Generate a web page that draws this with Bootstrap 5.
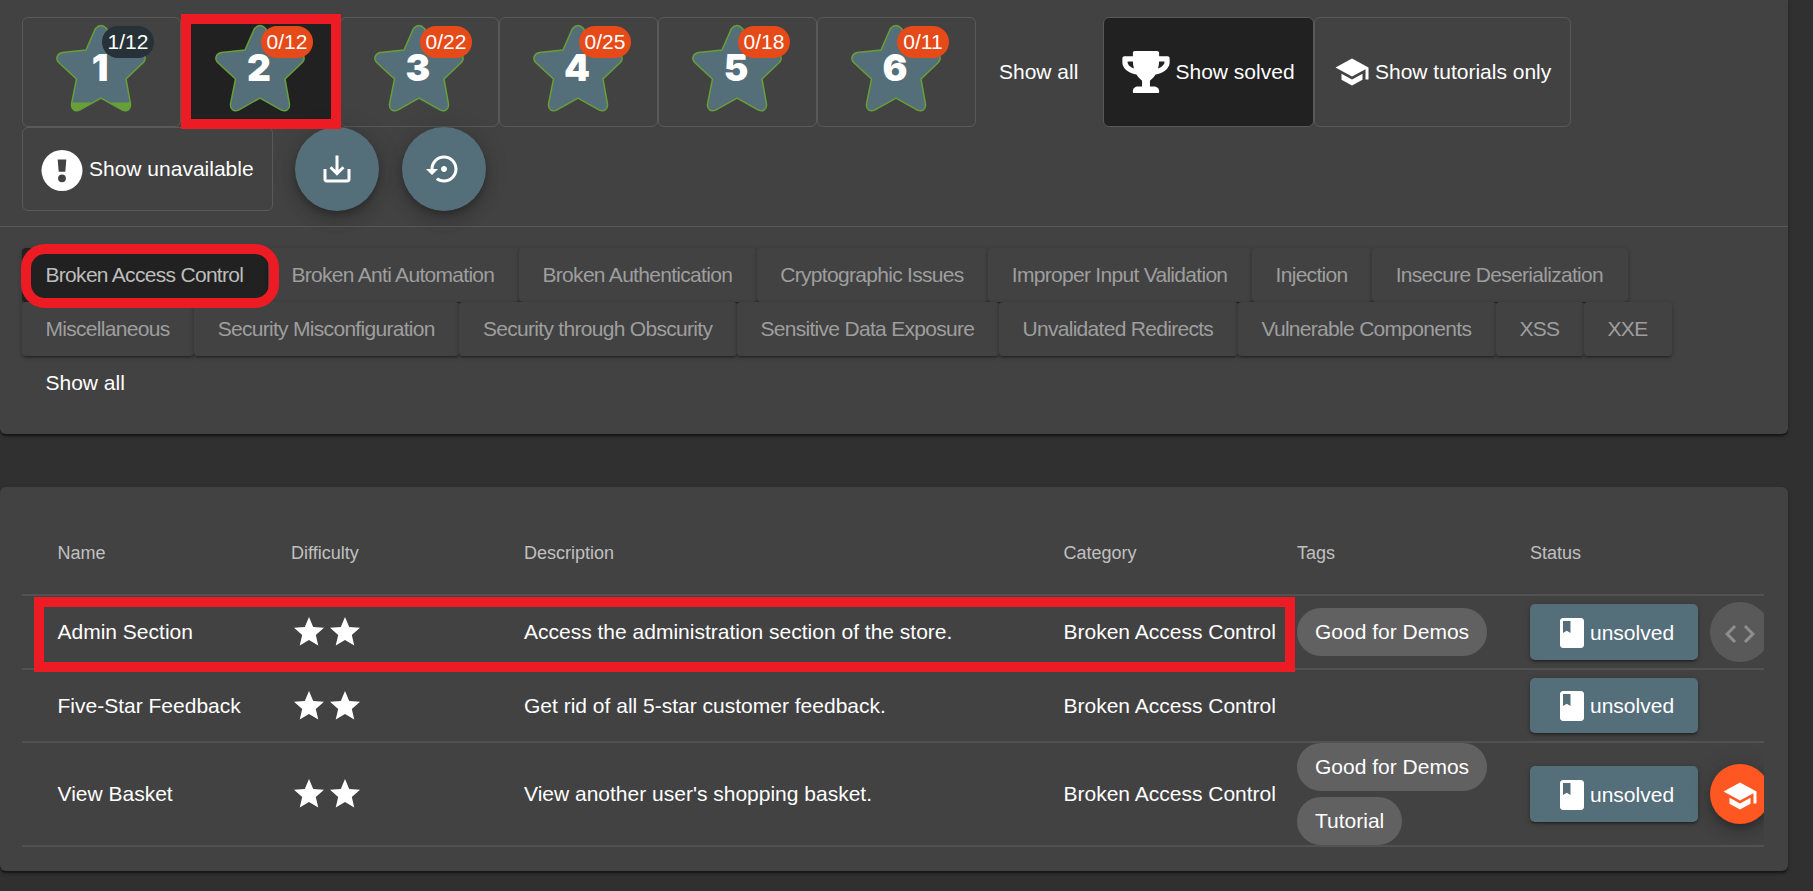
<!DOCTYPE html>
<html lang="en">
<head>
<meta charset="utf-8">
<title>Score Board</title>
<meta name="viewport" content="width=device-width, initial-scale=1">
<link rel="stylesheet" href="https://cdn.jsdelivr.net/npm/bootstrap@5.3.0/dist/css/bootstrap.min.css">
<style>
body{background:#303030;color:#fff;font:21px/32px "Liberation Sans",Arial,sans-serif;width:1813px;height:891px;overflow:hidden}
svg{display:block;flex:none}
.panel{width:1788px;background:#424242;box-shadow:0 3px 2px -1px rgba(0,0,0,.3),0 2px 2px rgba(0,0,0,.25),0 2px 5px rgba(0,0,0,.15)}
.panel-top{height:434px;padding-top:17px;border-radius:0 0 6px 6px}
.panel-list{height:384px;margin-top:53px;border-radius:6px;padding:0 24px 0 22px}
.tog{border:1px solid #595959;border-radius:6px;height:110px}
.tog-star{width:159px;padding:6px 0 0 33px;line-height:1}
.tog.on{background:#212121}
.lvl{position:absolute;left:-1px;top:24px;width:90px;text-align:center;font:900 37px/40px Inter,sans-serif}
.cnt{position:absolute;left:46px;top:2px;width:52px;height:32px;border-radius:16px;background:#e64a19;text-align:center;line-height:31px}
.cnt.done{background:#263238}
.all{width:127px;height:110px;padding:39px 0 0 23px}
.fab{width:84px;height:84px;background:#546e7a;box-shadow:0 4px 7px -1px rgba(0,0,0,.2),0 9px 15px rgba(0,0,0,.14),0 1px 27px rgba(0,0,0,.12)}
.rule{height:1px;background:#595959;margin-top:15px}
.cats{padding:21px 0 0 22px}
.cat{height:54px;line-height:54px;padding:0 24.7px 0 23.5px;border-radius:4px;background:#424242;color:#9e9e9e;letter-spacing:-.7px;white-space:nowrap;box-shadow:0 3px 2px -2px rgba(0,0,0,.28),0 2px 3px rgba(0,0,0,.18),0 1px 5px rgba(0,0,0,.14)}
.cat.on{background:#212121;color:#bdbdbd}
.mark-box{position:absolute;border:10px solid #ed1c24;z-index:3}
.mk1{left:181px;top:14px;width:160px;height:115px}
.mk2{left:21px;top:244px;width:258px;height:64px;border-radius:24px}
.mk3{left:12px;top:110px;width:1261px;height:75px}
.line{border-bottom:2px solid #525252;padding-left:35.5px;white-space:nowrap}
.c1{width:233.500px}.c2{width:233px}.c3{width:539.500px}.c4{width:233.500px}.c5{width:233px}.c6{width:234px}
.hdr{height:109px;padding-top:25px;font-size:18px;color:#c0c0c0}
.pill{height:48px;line-height:47px;border-radius:24px;background:#616161;padding:0 18px;width:max-content}
.act{width:168px;height:56px;border-radius:5px;background:#546e7a;padding:1px 0 0 24px;flex:none;box-shadow:0 3px 2px -2px rgba(0,0,0,.3),0 2px 3px rgba(0,0,0,.2),0 1px 7px rgba(0,0,0,.14)}
.dot{width:60px;height:60px;margin-left:12px;flex:none}
.dot.off{background:#595959;color:#8e8e8e;padding-top:4px}
.dot.hot{background:#ff5722;padding-top:4px;box-shadow:0 4px 7px -1px rgba(0,0,0,.2),0 9px 15px rgba(0,0,0,.14),0 1px 27px rgba(0,0,0,.12)}
</style>
</head>
<body>
<svg width="0" height="0" class="position-absolute" fill="currentColor">
<symbol id="bigstar" viewBox="0 0 90 88"><path d="M39.5 4.5Q45 -1.500 50.500 4.500L60 26L83.500 28.500C89 29.500 90.800 35 87.300 38.500L70 55L74.500 80C75 85.500 71 88.500 66 85.800L45 74L24 85.800C19 88.500 15 85.500 15.500 80L20.500 55L2.700 38.500C-.8 35 1 29.500 6.500 28.500L30 26Z" fill="#546e7a" stroke="#689f38" stroke-width="1.500"/></symbol>
<symbol id="star" viewBox="0 0 24 24"><path d="M12 17.270L18.180 21l-1.640-7.030L22 9.240l-7.190-.61L12 2 9.190 8.630 2 9.240l5.460 4.730L5.820 21z"/></symbol>
<symbol id="hat" viewBox="0 0 24 24"><path d="M5 13.180v4L12 21l7-3.820v-4L12 17l-7-3.820zM12 3L1 9l11 6 9-4.910V17h2V9L12 3z"/></symbol>
<symbol id="book" viewBox="0 0 24 24"><path d="M18 2H6c-1.100 0-2 .9-2 2v16c0 1.100.9 2 2 2h12c1.100 0 2-.9 2-2V4c0-1.100-.9-2-2-2zM6 4h5v8l-2.500-1.500L6 12V4z"/></symbol>
</svg>

<section class="panel panel-top position-relative">
 <div class="d-flex" style="padding-left:22px">
  <div class="tog tog-star"><div class="position-relative"><svg width="90" height="88"><use href="#bigstar"/><path d="M16 78.500H74.300V80C75 85.500 71 88.500 66 85.800L53.500 78.500H36.500L24 85.800C19 88.500 15 85.500 15.500 80Z" fill="#689f38"/></svg><span class="lvl">1</span><span class="cnt done">1/12</span></div></div>
  <div class="tog tog-star on"><div class="position-relative"><svg width="90" height="88"><use href="#bigstar"/></svg><span class="lvl">2</span><span class="cnt">0/12</span></div></div>
  <div class="tog tog-star"><div class="position-relative"><svg width="90" height="88"><use href="#bigstar"/></svg><span class="lvl">3</span><span class="cnt">0/22</span></div></div>
  <div class="tog tog-star"><div class="position-relative"><svg width="90" height="88"><use href="#bigstar"/></svg><span class="lvl">4</span><span class="cnt">0/25</span></div></div>
  <div class="tog tog-star"><div class="position-relative"><svg width="90" height="88"><use href="#bigstar"/></svg><span class="lvl">5</span><span class="cnt">0/18</span></div></div>
  <div class="tog tog-star"><div class="position-relative"><svg width="90" height="88"><use href="#bigstar"/></svg><span class="lvl">6</span><span class="cnt">0/11</span></div></div>
  <div class="all">Show all</div>
  <div class="tog on d-flex align-items-center" style="width:211px;padding-left:18px"><svg width="48" height="42" viewBox="0 0 576 512" fill="#fff"><path d="M552 64H448V24c0-13.300-10.700-24-24-24H152c-13.300 0-24 10.700-24 24v40H24C10.700 64 0 74.700 0 88v56c0 35.700 22.500 72.400 61.900 100.700 31.500 22.700 69.800 37.100 110 41.700C203.300 338.500 240 360 240 360v72h-48c-35.300 0-64 20.700-64 56v12c0 6.600 5.400 12 12 12h296c6.600 0 12-5.400 12-12v-12c0-35.300-28.700-56-64-56h-48v-72s36.700-21.500 68.100-73.600c40.300-4.600 78.600-19 110-41.700 39.300-28.300 61.900-65 61.900-100.700V88c0-13.300-10.700-24-24-24zM99.300 192.800C74.900 175.200 64 155.600 64 144v-16h64.200c1 32.600 5.800 61.200 12.800 86.200-15.100-5.200-29.200-12.400-41.700-21.400zM512 144c0 16.100-17.700 36.100-35.300 48.800-12.500 9-26.700 16.200-41.800 21.400 7-25 11.800-53.600 12.800-86.200H512v16z"/></svg><span class="text-nowrap" style="padding-left:5.500px">Show solved</span></div>
  <div class="tog d-flex align-items-center" style="width:257px;padding-left:19px"><svg width="36" height="36" fill="#fff"><use href="#hat"/></svg><span class="text-nowrap" style="padding-left:5px">Show tutorials only</span></div>
 </div>
 <div class="d-flex" style="padding-left:22px">
  <div class="tog d-flex align-items-center" style="width:251px;height:84px;padding-left:18px"><svg width="42" height="42" viewBox="0 0 42 42" class="mt-1"><circle cx="21" cy="20.500" r="20.500" fill="#fff"/><path d="M16.700 9.500h8.600l-1 12.200h-6.600z" fill="#424242"/><circle cx="21" cy="28.300" r="3.900" fill="#424242"/></svg><span class="text-nowrap" style="padding-left:6px">Show unavailable</span></div>
  <div class="fab rounded-circle d-flex align-items-center justify-content-center" style="margin-left:22px"><svg width="36" height="36" viewBox="0 0 24 24" fill="#fff"><path d="M19 12v7H5v-7H3v7c0 1.100.9 2 2 2h14c1.100 0 2-.9 2-2v-7h-2zm-6 .67l2.590-2.580L17 11.500l-5 5-5-5 1.410-1.410L11 12.670V3h2z"/></svg></div>
  <div class="fab rounded-circle d-flex align-items-center justify-content-center" style="margin-left:23px"><svg width="36" height="36" viewBox="0 0 24 24" fill="#fff"><path d="M14 12c0-1.100-.9-2-2-2s-2 .9-2 2 .9 2 2 2 2-.9 2-2zm-2-9c-4.970 0-9 4.030-9 9H0l4 4 4-4H5c0-3.870 3.130-7 7-7s7 3.130 7 7-3.130 7-7 7c-1.510 0-2.910-.49-4.060-1.300l-1.420 1.440C8.040 20.300 9.940 21 12 21c4.970 0 9-4.030 9-9s-4.030-9-9-9z"/></svg></div>
 </div>
 <div class="rule"></div>
 <div class="cats">
  <div class="d-flex"><div class="cat on">Broken Access Control</div><div class="cat">Broken Anti Automation</div><div class="cat">Broken Authentication</div><div class="cat">Cryptographic Issues</div><div class="cat">Improper Input Validation</div><div class="cat">Injection</div><div class="cat">Insecure Deserialization</div></div>
  <div class="d-flex"><div class="cat">Miscellaneous</div><div class="cat">Security Misconfiguration</div><div class="cat">Security through Obscurity</div><div class="cat">Sensitive Data Exposure</div><div class="cat">Unvalidated Redirects</div><div class="cat">Vulnerable Components</div><div class="cat">XSS</div><div class="cat">XXE</div></div>
  <div style="padding:11px 0 0 23.500px">Show all</div>
 </div>
 <div class="mark-box mk1"></div><div class="mark-box mk2"></div>
</section>

<section class="panel panel-list">
 <div class="position-relative">
 <div class="overflow-hidden">
  <div class="line hdr d-flex align-items-center"><div class="c1">Name</div><div class="c2">Difficulty</div><div class="c3">Description</div><div class="c4">Category</div><div class="c5">Tags</div><div class="c6">Status</div></div>
  <div class="line d-flex align-items-center" style="height:74px"><div class="c1">Admin Section</div><div class="c2 d-flex"><svg width="36" height="36" fill="#fff"><use href="#star"/></svg><svg width="36" height="36" fill="#fff"><use href="#star"/></svg></div><div class="c3">Access the administration section of the store.</div><div class="c4">Broken Access Control</div><div class="c5"><div class="pill">Good for Demos</div></div><div class="c6 d-flex align-items-center"><div class="act d-flex align-items-center"><svg width="36" height="36" fill="#fff"><use href="#book"/></svg>unsolved</div><div class="dot off rounded-circle d-flex align-items-center justify-content-center"><svg width="36" height="36" viewBox="0 0 24 24" fill="currentColor"><path d="M9.400 16.600L4.800 12l4.600-4.600L8 6l-6 6 6 6 1.400-1.400zm5.200 0l4.600-4.600-4.600-4.600L16 6l6 6-6 6-1.400-1.400z"/></svg></div></div></div>
  <div class="line d-flex align-items-center" style="height:73px"><div class="c1">Five-Star Feedback</div><div class="c2 d-flex"><svg width="36" height="36" fill="#fff"><use href="#star"/></svg><svg width="36" height="36" fill="#fff"><use href="#star"/></svg></div><div class="c3">Get rid of all 5-star customer feedback.</div><div class="c4">Broken Access Control</div><div class="c5"></div><div class="c6"><div class="act d-flex align-items-center" style="height:55px"><svg width="36" height="36" fill="#fff"><use href="#book"/></svg>unsolved</div></div></div>
  <div class="line d-flex align-items-center overflow-hidden" style="height:104px"><div class="c1">View Basket</div><div class="c2 d-flex"><svg width="36" height="36" fill="#fff"><use href="#star"/></svg><svg width="36" height="36" fill="#fff"><use href="#star"/></svg></div><div class="c3">View another user's shopping basket.</div><div class="c4">Broken Access Control</div><div class="c5"><div class="pill">Good for Demos</div><div class="pill" style="margin-top:6px">Tutorial</div></div><div class="c6 d-flex align-items-center"><div class="act d-flex align-items-center"><svg width="36" height="36" fill="#fff"><use href="#book"/></svg>unsolved</div><div class="dot hot rounded-circle d-flex align-items-center justify-content-center"><svg width="36" height="36" fill="#fff"><use href="#hat"/></svg></div></div></div>
 </div>
 <div class="mark-box mk3"></div>
 </div>
</section>
<script src="https://cdn.jsdelivr.net/npm/bootstrap@5.3.0/dist/js/bootstrap.bundle.min.js"></script>
</body>
</html>
